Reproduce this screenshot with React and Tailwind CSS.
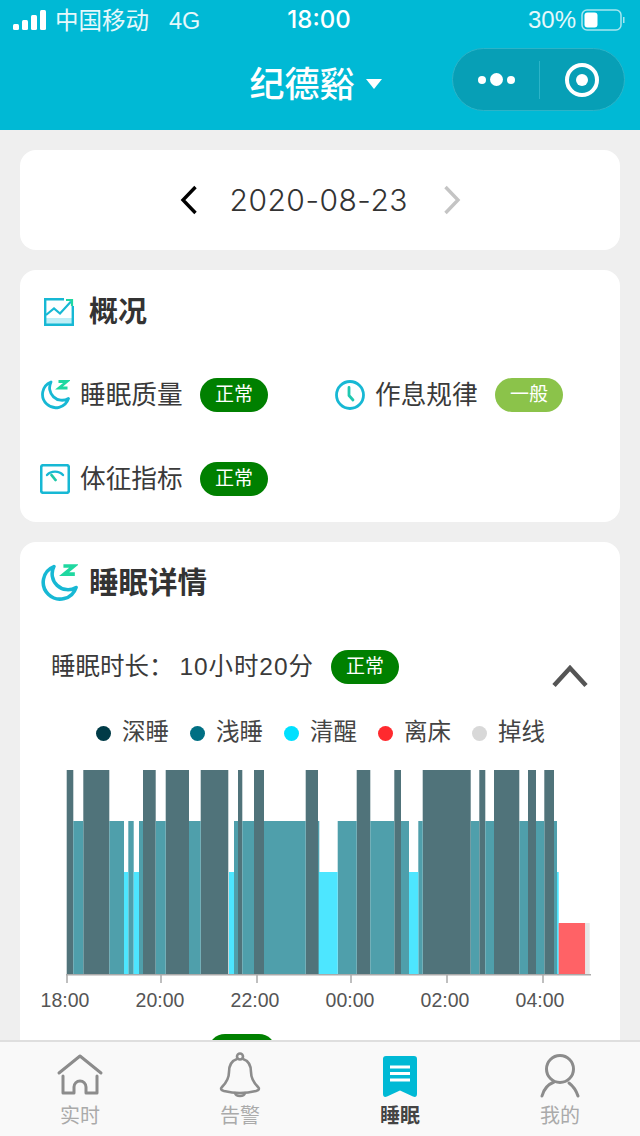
import React from 'react';

const FONT = "[font-family:'Liberation_Sans','Noto_Sans_CJK_SC',sans-serif]";
const NUM_FONT = "[font-family:'Inter','Noto_Sans_CJK_SC',sans-serif]";

// x ranges read off the chart, in page pixels
const deep = [[66.7, 73.3], [83.3, 109.3], [143, 155.7], [165.7, 189], [200.7, 228.3], [238, 242.3], [254, 264], [305.7, 318], [356.7, 370.3], [394.3, 401], [422.7, 470.7], [479.3, 485.3], [494, 519.3], [528, 536], [544.3, 554]];
const light = [[73.3, 83.3], [109.3, 124], [128.3, 133.7], [139, 143], [155.7, 165.7], [189, 200.7], [234, 238], [242.3, 254], [264, 305.7], [318, 319.3], [337.7, 356.7], [370.3, 394.3], [401, 409], [418.3, 422.7], [470.7, 479.3], [485.3, 494], [519.3, 528], [536, 544.3], [554, 557]];
const awake = [[124, 128.3], [133.7, 139], [229, 234], [319, 337.7], [409, 418.3], [557, 558.7]];
const ticks = [[67, 65, '18:00'], [161, 160, '20:00'], [257, 255, '22:00'], [351, 350, '00:00'], [447, 445, '02:00'], [543, 540, '04:00']];
const legend = [['深睡', 'bg-[#003b47]'], ['浅睡', 'bg-[#006f83]'], ['清醒', 'bg-[#00e0ff]'], ['离床', 'bg-[#ff2a2e]'], ['掉线', 'bg-[#d8d8d8]']];

function Badge({ children, light }) {
    return (
        <span className={`flex items-center justify-center w-[68px] h-[34px] rounded-full text-[19px] text-white shrink-0 ${light ? 'bg-[#8bc34a]' : 'bg-[#008000]'}`}>
            {children}
        </span>
    );
}

function Moon({ size }) {
    return (
        <svg width={size} height={size} viewBox="0 0 30 30" fill="none" className="shrink-0">
            <path d="M11 2A13.3 13.3 0 1 0 28.5 18.5A12.5 12.5 0 0 1 11 2Z" stroke="#17b8d4" strokeWidth="2.8" strokeLinejoin="round" />
            <path d="M18.5 1.5H27L19 8H27.5" stroke="#1fd8a0" strokeWidth="2.8" />
        </svg>
    );
}

function Clock() {
    return (
        <svg width="30" height="30" viewBox="0 0 30 30" fill="none" className="shrink-0">
            <circle cx="15" cy="15" r="13.5" stroke="#17b8d4" strokeWidth="2.8" />
            <path d="M14 7.5V15.5L18 20" stroke="#1fc8b0" strokeWidth="2.8" strokeLinecap="round" strokeLinejoin="round" />
        </svg>
    );
}

function Gauge() {
    return (
        <svg width="30" height="30" viewBox="0 0 30 30" fill="none" className="shrink-0">
            <rect x="1.2" y="1.2" width="27.6" height="27.6" rx="2" stroke="#17b8d4" strokeWidth="2.6" />
            <path d="M7 11C11 6.5 19 6.5 23 11" stroke="#17b8d4" strokeWidth="2.4" strokeLinecap="round" />
            <path d="M11.5 11L15.5 16" stroke="#1fc8a8" strokeWidth="2.8" strokeLinecap="round" />
        </svg>
    );
}

function Trend() {
    return (
        <svg width="30" height="28" viewBox="0 0 30 28" fill="none" className="shrink-0">
            <rect x="1" y="20" width="28" height="7" fill="#bdeef6" />
            <path d="M20 1.2H1.2V26.8H28.8V8" stroke="#17b8d4" strokeWidth="2.4" />
            <path d="M2 17L10 10.5L16 15.5L27 3.5" stroke="#17b8d4" strokeWidth="2.2" />
            <path d="M22 2H28V8" stroke="#1fd8a0" strokeWidth="2.2" />
        </svg>
    );
}

function SleepChart() {
    return (
        <svg width="600" height="266" viewBox="20 750 600 266" className="block">
            {deep.map(([a, b]) => <rect key={a} x={a} y="770" width={b - a} height="204.5" fill="#50737a" />)}
            {light.map(([a, b]) => <rect key={a} x={a} y="821" width={b - a} height="153.5" fill="#4f9fab" />)}
            {awake.map(([a, b]) => <rect key={a} x={a} y="872" width={b - a} height="102.5" fill="#4de6ff" />)}
            <rect x="558.7" y="923" width="26.6" height="51.5" fill="#ff6266" />
            <rect x="585.3" y="923" width="4.4" height="51.5" fill="#e6e6e6" />
            <rect x="66" y="974" width="525" height="1.5" fill="#aaaaaa" />
            {ticks.map(([x, tx, label]) => (
                <g key={label}>
                    <rect x={x - 0.75} y="975" width="1.5" height="8" fill="#aaaaaa" />
                    <text x={tx} y="1007" textAnchor="middle" fontSize="19.5" fill="#555555">{label}</text>
                </g>
            ))}
        </svg>
    );
}

function TabBar() {
    const grey = '#8c8c8c';
    return (
        <div className="fixed left-0 right-0 bottom-0 h-[96px] grid grid-cols-4 bg-[#f9f9f9] border-t-2 border-[#dfdfdf]">
            <div className="flex flex-col items-center pt-[10px]">
                <svg width="48" height="46" viewBox="0 0 48 46" fill="none" stroke={grey} strokeWidth="3" strokeLinecap="round" strokeLinejoin="round">
                    <path d="M3 21L24 4L45 21" />
                    <path d="M7 24V41H18V35A6 6 0 0 1 30 35V41H41V24" />
                </svg>
                <span className="text-[20px] leading-6 mt-[6px] text-[#aaaaaa]">实时</span>
            </div>
            <div className="flex flex-col items-center pt-[10px]">
                <svg width="48" height="46" viewBox="0 0 48 46" fill="none" stroke={grey} strokeWidth="2.6" strokeLinecap="round" strokeLinejoin="round">
                    <circle cx="24" cy="4.5" r="3" />
                    <path d="M21 7C15 9 13 14 13 20C13 27 10 31 6 35C4 37 5 38 8 39C18 41.5 30 41.5 40 39C43 38 44 37 42 35C38 31 35 27 35 20C35 14 33 9 27 7" />
                    <path d="M19 41C20 45 28 45 29 41" />
                </svg>
                <span className="text-[20px] leading-6 mt-[6px] text-[#aaaaaa]">告警</span>
            </div>
            <div className="flex flex-col items-center pt-[10px]">
                <svg width="48" height="46" viewBox="0 0 48 46" fill="none">
                    <path d="M7 7A3 3 0 0 1 10 4H38A3 3 0 0 1 41 7V42C41 45 39 45.5 37 44.5L24 38.5L11 44.5C9 45.5 7 45 7 42Z" fill="#00b9d5" />
                    <path d="M14 15H34M14 21.5H34M14 28H34" stroke="#ffffff" strokeWidth="3" />
                </svg>
                <span className="text-[20px] leading-6 mt-[6px] font-bold text-[#444444]">睡眠</span>
            </div>
            <div className="flex flex-col items-center pt-[10px]">
                <svg width="48" height="46" viewBox="0 0 48 46" fill="none" stroke={grey} strokeWidth="3" strokeLinecap="round">
                    <circle cx="24" cy="17" r="13.5" />
                    <path d="M6 44C8 36 13 32 18 30" />
                    <path d="M42 44C40 38 37 34 33 31" />
                </svg>
                <span className="text-[20px] leading-6 mt-[6px] text-[#aaaaaa]">我的</span>
            </div>
        </div>
    );
}

export default function App() {
    return (
        <div className={`h-[1136px] overflow-hidden bg-[#efefef] ${FONT}`}>
            {/* Header */}
            <div className="h-[130px] bg-[#00b9d5] text-white">
                <div className="h-[40px] grid grid-cols-3 items-center pl-[13px] pr-[15px]">
                    <div className="flex items-center">
                        <svg width="34" height="20" viewBox="0 0 34 20" fill="#ffffff">
                            <rect x="0" y="14" width="6" height="6" rx="1.5" />
                            <rect x="9" y="10" width="6" height="10" rx="1.5" />
                            <rect x="18" y="5" width="6" height="15" rx="1.5" />
                            <rect x="27" y="0" width="6" height="20" rx="1.5" />
                        </svg>
                        <span className="ml-[8px] mt-[3px] text-[23.5px] text-white/90">中国移动</span>
                        <span className="ml-[20px] mt-[3px] text-[23.5px] text-white/90">4G</span>
                    </div>
                    <div className={`text-center text-[24px] font-medium ${NUM_FONT}`}>18:00</div>
                    <div className="flex items-center justify-end">
                        <span className="text-[24px] text-white/90">30%</span>
                        <svg width="44" height="24" viewBox="0 0 44 24" fill="none" className="ml-[5px]">
                            <rect x="1" y="2" width="39" height="20" rx="5" stroke="#a5e6f0" strokeWidth="1.5" />
                            <rect x="3.5" y="4.5" width="13" height="15" rx="3" fill="#ffffff" />
                            <rect x="42" y="9" width="1.5" height="6" fill="#a5e6f0" />
                        </svg>
                    </div>
                </div>
                <div className="relative h-[90px] flex items-center justify-center">
                    <span className="ml-[-9px] text-[35px] font-medium leading-none mt-[-1px]">纪德谿</span>
                    <span className="ml-[11px] mt-[-2px] w-0 h-0 border-x-8 border-t-[10px] border-x-transparent border-t-white"></span>
                    {/* Capsule */}
                    <div className="absolute right-[15px] top-[8px] w-[173px] h-[63px] rounded-full bg-[#079fb6] border border-[#2cb4c8] flex items-center">
                        <div className="w-[86px] flex items-center justify-center gap-[4px]">
                            <span className="w-[8px] h-[8px] rounded-full bg-white"></span>
                            <span className="w-[13px] h-[13px] rounded-full bg-white"></span>
                            <span className="w-[8px] h-[8px] rounded-full bg-white"></span>
                        </div>
                        <div className="w-px h-[38px] bg-[#2cb4c8]"></div>
                        <div className="flex-1 flex items-center justify-center">
                            <span className="w-[34px] h-[34px] rounded-full border-[4px] border-white flex items-center justify-center">
                                <span className="w-[12px] h-[12px] rounded-full bg-white"></span>
                            </span>
                        </div>
                    </div>
                </div>
            </div>

            <div className="flex flex-col gap-5 px-5 pt-5">
                {/* Date picker */}
                <div className="h-[100px] rounded-2xl bg-white flex items-center justify-center">
                    <svg width="18" height="30" viewBox="0 0 18 30" fill="none" stroke="#000000" strokeWidth="3.4">
                        <path d="M15.5 2L3 15L15.5 28" />
                    </svg>
                    <span className={`mx-[32px] w-[181px] text-[30px] font-light tracking-[0.5px] text-[#333333] whitespace-nowrap ${NUM_FONT}`}>2020-08-23</span>
                    <svg width="18" height="30" viewBox="0 0 18 30" fill="none" stroke="#c4c4c4" strokeWidth="3.4">
                        <path d="M2.5 2L15 15L2.5 28" />
                    </svg>
                </div>

                {/* Overview */}
                <div className="h-[252px] rounded-2xl bg-white">
                    <div className="flex items-center pl-[24px] pt-[27px]">
                        <Trend />
                        <span className="ml-[15px] text-[29px] leading-[30px] font-bold text-[#333333]">概况</span>
                    </div>
                    <div className="grid grid-cols-[295px_1fr] gap-y-[50px] pl-[20px] mt-[51px] text-[25.7px] text-[#3a3a3a]">
                        <div className="flex items-center h-[34px]">
                            <Moon size={30} />
                            <span className="ml-[10px] w-[120px]">睡眠质量</span>
                            <Badge>正常</Badge>
                        </div>
                        <div className="flex items-center h-[34px]">
                            <Clock />
                            <span className="ml-[10px] w-[120px]">作息规律</span>
                            <Badge light>一般</Badge>
                        </div>
                        <div className="flex items-center h-[34px]">
                            <Gauge />
                            <span className="ml-[10px] w-[120px]">体征指标</span>
                            <Badge>正常</Badge>
                        </div>
                    </div>
                </div>

                {/* Sleep details */}
                <div className="rounded-2xl bg-white h-[600px]">
                    <div className="flex items-center pl-[20px] pt-[22px]">
                        <Moon size={38} />
                        <span className="ml-[11px] text-[29.5px] leading-[38px] font-bold text-[#333333]">睡眠详情</span>
                    </div>
                    <div className="relative flex items-center pl-[31px] mt-[48px] h-[34px]">
                        <span className="w-[280px] text-[24.5px] text-[#3a3a3a] whitespace-nowrap">
                            睡眠时长：<span className="ml-[6px] tracking-[0.9px]">10小时20分</span>
                        </span>
                        <Badge>正常</Badge>
                        <svg width="38" height="24" viewBox="0 0 38 24" fill="none" stroke="#555555" strokeWidth="4.5" className="absolute right-[31px] top-[14px]">
                            <path d="M3 21.5L19 4L35 21.5" />
                        </svg>
                    </div>
                    <div className="flex justify-center gap-[21px] pl-[1px] mt-[32px] h-[34px] items-center text-[23.5px] text-[#444444]">
                        {legend.map(([name, color]) => (
                            <div key={name} className="flex items-center gap-[11px]">
                                <span className={`w-[15px] h-[15px] rounded-full ${color}`}></span>
                                <span>{name}</span>
                            </div>
                        ))}
                    </div>
                    <SleepChart />
                    <div className="flex items-center pl-[31px] mt-[18px] h-[34px]">
                        <span className="w-[157px] pt-[6px] text-[24.5px] text-[#3a3a3a] whitespace-nowrap">深睡时长：3时</span>
                        <Badge>正常</Badge>
                    </div>
                </div>
            </div>

            <TabBar />
        </div>
    );
}
